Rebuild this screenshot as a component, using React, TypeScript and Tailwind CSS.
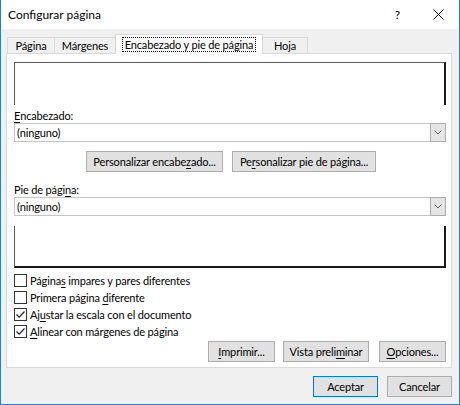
import React from "react";

function Btn({ children, w, primary }: { children: React.ReactNode; w: string; primary?: boolean }) {
  return (
    <div
      className={`h-[21px] ${w} bg-[#e1e1e1] border ${primary ? "border-[#0078d7]" : "border-[#adadad]"} flex items-center justify-center text-black whitespace-nowrap`}
    >
      <span>{children}</span>
    </div>
  );
}

function Check({ checked, children }: { checked?: boolean; children: React.ReactNode }) {
  return (
    <div className="h-[17px] flex items-center">
      <div className="w-[13px] h-[13px] border border-[#333333] bg-white flex items-center justify-center">
        {checked && (
          <svg width="11" height="11" viewBox="0 0 11 11">
            <path d="M1.5 5.5 L4.2 8.2 L9.5 2.5" stroke="#222" strokeWidth="1.2" fill="none" />
          </svg>
        )}
      </div>
      <span className="ml-[3px] whitespace-nowrap">{children}</span>
    </div>
  );
}

function Combo() {
  return (
    <div className="h-[19px] flex">
      <div className="flex-1 border-y border-l border-[#c4c4c4] bg-white flex items-center pl-[2px]">(ninguno)</div>
      <div className="w-[16px] border border-[#acacac] bg-[#e5e5e5] flex items-center justify-center">
        <svg width="8" height="5" viewBox="0 0 8 5">
          <path d="M0.5 0.5 L4 4 L7.5 0.5" stroke="#606060" strokeWidth="1" fill="none" />
        </svg>
      </div>
    </div>
  );
}

const U = ({ children }: { children: React.ReactNode }) => <span className="underline underline-offset-[2px]">{children}</span>;

export default function App() {
  return (
    <div className="w-[460px] h-[405px] bg-[#f0f0f0] border-x border-b border-[#1883d7] flex flex-col font-['Lato',sans-serif] text-[11px] tracking-[-0.15px] text-black leading-none">
      {/* Title bar */}
      <div className="h-[29px] bg-white flex items-center pl-[7px]">
        <span className="text-[12px] tracking-normal">Configurar página</span>
        <div className="flex-1" />
        <span className="text-[12px] mr-[33px]">?</span>
        <svg width="11" height="11" viewBox="0 0 11 11" className="mr-[15px]">
          <path d="M0.5 0.5 L10.5 10.5 M10.5 0.5 L0.5 10.5" stroke="#000" strokeWidth="1" />
        </svg>
      </div>
      {/* Tabs */}
      <div className="h-[24px] flex items-end pl-[6px]">
        <div className="h-[16px] w-[47px] border-t border-l border-[#d9d9d9] flex items-center justify-center">Página</div>
        <div className="h-[16px] w-[61px] border-t border-l border-[#d9d9d9] flex items-center justify-center">Márgenes</div>
        <div className="h-[20px] w-[148px] -mb-px relative z-10 bg-white border-t border-x border-[#d9d9d9] flex items-center justify-center">
          <span className="border border-dotted border-black px-[2px] h-[15px] flex items-center whitespace-nowrap">Encabezado y pie de página</span>
        </div>
        <div className="h-[16px] w-[45px] border-t border-r border-[#d9d9d9] flex items-center justify-center">Hoja</div>
      </div>
      {/* Panel */}
      <div className="ml-[5px] w-[446px] bg-white border border-[#d9d9d9] pl-[7px] pr-[5px] pt-[8px] pb-[5px] flex flex-col">
        <div className="h-[43px] border-t border-l border-[#5a5a5a] border-r-2 border-r-[#1a1a1a]" />
        <div className="mt-[2px] h-[16px] flex items-center">
          <U>E</U>ncabezado:
        </div>
        <Combo />
        <div className="mt-[9px] flex justify-center gap-[9px] pl-[2px]">
          <Btn w="w-[137px]">
            Personalizar encabe<U>z</U>ado...
          </Btn>
          <Btn w="w-[144px]">
            Pe<U>r</U>sonalizar pie de página...
          </Btn>
        </div>
        <div className="mt-[9px] h-[16px] flex items-center">
          Pie de pági<U>n</U>a:
        </div>
        <Combo />
        <div className="mt-[10px] h-[42px] border-l border-[#5a5a5a] border-r-2 border-b-2 border-r-[#1a1a1a] border-b-[#1a1a1a]" />
        <div className="mt-[4px] flex flex-col">
          <Check>
            Página<U>s</U> impares y pares diferentes
          </Check>
          <Check>
            Primera página <U>d</U>iferente
          </Check>
          <Check checked>
            Aj<U>u</U>star la escala con el documento
          </Check>
          <Check checked>
            <U>A</U>linear con márgenes de página
          </Check>
        </div>
        <div className="mt-[1px] flex justify-end">
          <Btn w="w-[67px]">
            <U>I</U>mprimir...
          </Btn>
          <div className="w-[8px]" />
          <Btn w="w-[86px]">
            Vista preli<U>m</U>inar
          </Btn>
          <div className="w-[10px]" />
          <Btn w="w-[67px]">
            <U>O</U>pciones...
          </Btn>
        </div>
      </div>
      {/* Bottom buttons */}
      <div className="mt-[8px] flex justify-end pr-[7px] gap-[9px]">
        <Btn w="w-[65px]" primary>
          Aceptar
        </Btn>
        <Btn w="w-[65px]">Cancelar</Btn>
      </div>
    </div>
  );
}
